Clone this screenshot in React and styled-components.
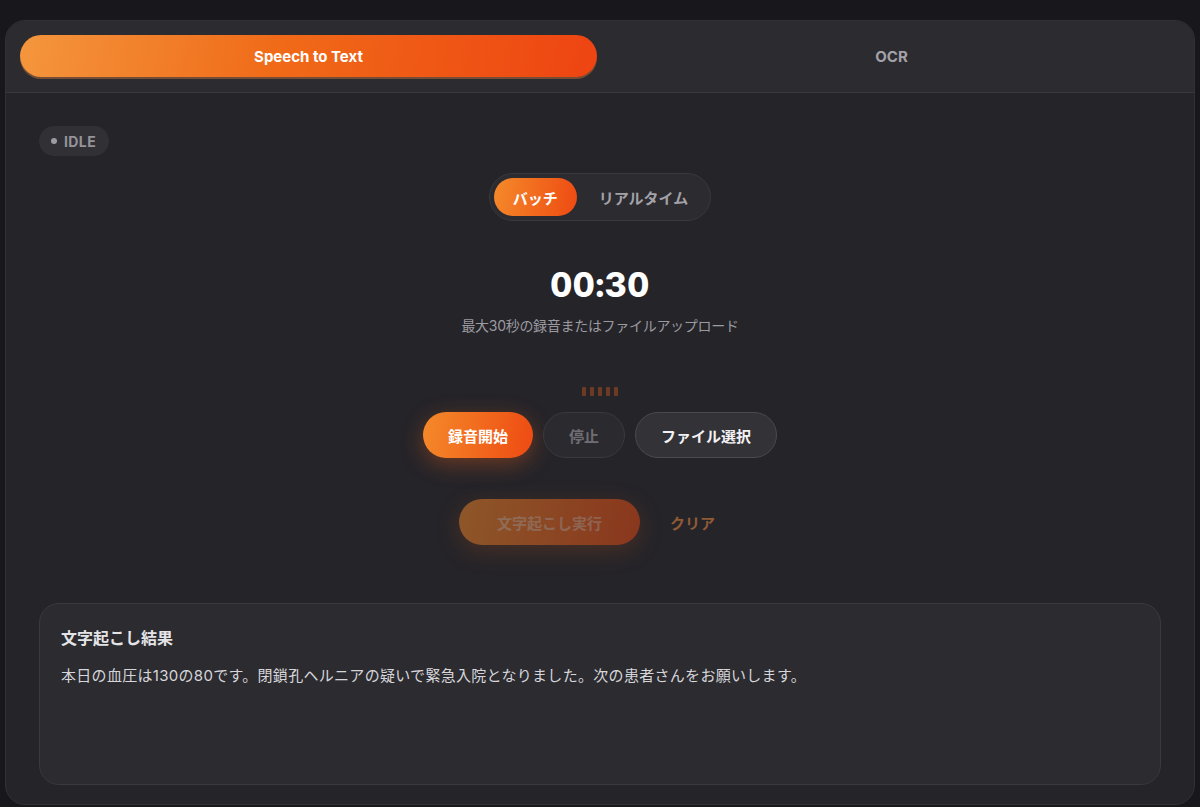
import styled, { createGlobalStyle } from "styled-components";

const GlobalStyle = createGlobalStyle`
    * { box-sizing: border-box; }
    html, body {
        margin: 0;
        padding: 0;
        background: #18171c;
        font-family: Inter, "Noto Sans CJK JP", sans-serif;
    }
`;

const App = () => {
    const bars = [0, 1, 2, 3, 4];

    return (
        <>
            <GlobalStyle />
            <Page>
                <Card>
                    <TabBar>
                        <Tab active>Speech to Text</Tab>
                        <Tab>OCR</Tab>
                    </TabBar>
                    <Body>
                        <StatusRow>
                            <Badge><Dot />IDLE</Badge>
                        </StatusRow>
                        <ModeToggle>
                            <ModeButton active>バッチ</ModeButton>
                            <ModeButton>リアルタイム</ModeButton>
                        </ModeToggle>
                        <Timer>00:30</Timer>
                        <Hint>最大30秒の録音またはファイルアップロード</Hint>
                        <Meter>
                            {bars.map((b) => <Bar key={b} />)}
                        </Meter>
                        <ButtonRow>
                            <PrimaryButton>録音開始</PrimaryButton>
                            <GhostButton disabled>停止</GhostButton>
                            <OutlineButton>ファイル選択</OutlineButton>
                        </ButtonRow>
                        <ActionRow>
                            <PrimaryButton dim wide>文字起こし実行</PrimaryButton>
                            <TextButton>クリア</TextButton>
                        </ActionRow>
                        <ResultBox>
                            <ResultTitle>文字起こし結果</ResultTitle>
                            <ResultText>本日の血圧は130の80です。閉鎖孔ヘルニアの疑いで緊急入院となりました。次の患者さんをお願いします。</ResultText>
                        </ResultBox>
                    </Body>
                </Card>
            </Page>
        </>
    );
};

export default App;

const Page = styled.div`
    width: 1200px;
    height: 807px;
    padding: 20px 5px 0 5px;
    overflow: hidden;
`;

const Card = styled.div`
    width: 1190px;
    height: 785px;
    border-radius: 20px;
    background: #252429;
    border: 1px solid #313035;
    overflow: hidden;
    display: flex;
    flex-direction: column;
`;

const TabBar = styled.div`
    display: grid;
    grid-template-columns: 1fr 1fr;
    column-gap: 6px;
    padding: 14px 14px 15px;
    background: #2c2b30;
    border-bottom: 1px solid #39383d;
`;

const Tab = styled.button`
    height: 42px;
    border: 0;
    border-radius: 21px;
    font-family: Inter, "Noto Sans CJK JP", sans-serif;
    font-size: 15px;
    font-weight: 700;
    cursor: pointer;
    background: ${(p) => (p.active ? "linear-gradient(100deg, #f4963d 0%, #f06a18 45%, #ee4412 100%)" : "transparent")};
    color: ${(p) => (p.active ? "#ffffff" : "#a3a2a8")};
    box-shadow: ${(p) => (p.active ? "0 2px 0 rgba(255, 140, 60, 0.35)" : "none")};
`;

const Body = styled.div`
    display: flex;
    flex-direction: column;
    align-items: center;
    padding: 33px 33px 0;
`;

const StatusRow = styled.div`
    align-self: stretch;
    display: flex;
`;

const Badge = styled.div`
    display: flex;
    align-items: center;
    column-gap: 7px;
    height: 30px;
    padding: 0 13px 0 12px;
    border-radius: 15px;
    background: #313035;
    color: #95949a;
    font-size: 14px;
    font-weight: 700;
    letter-spacing: 0.4px;
`;

const Dot = styled.span`
    width: 6px;
    height: 6px;
    border-radius: 50%;
    background: #9c9ba1;
`;

const ModeToggle = styled.div`
    margin-top: 17px;
    display: flex;
    align-items: center;
    column-gap: 4px;
    height: 48px;
    padding: 0 4px;
    border-radius: 24px;
    background: #2c2b30;
    border: 1px solid #3a393e;
`;

const ModeButton = styled.button`
    height: 38px;
    padding: 0 ${(p) => (p.active ? "19px" : "18px")};
    border: 0;
    border-radius: 19px;
    font-family: Inter, "Noto Sans CJK JP", sans-serif;
    font-size: 15px;
    font-weight: 700;
    cursor: pointer;
    background: ${(p) => (p.active ? "linear-gradient(100deg, #f58a2a 0%, #ee4a12 100%)" : "transparent")};
    color: ${(p) => (p.active ? "#ffffff" : "#a3a2a8")};
`;

const Timer = styled.div`
    margin-top: 44px;
    color: #ffffff;
    font-size: 34px;
    font-weight: 800;
    line-height: 40px;
    letter-spacing: 0.5px;
    font-variant-numeric: tabular-nums;
`;

const Hint = styled.div`
    margin-top: 11px;
    color: #9b9aa0;
    font-size: 14px;
    line-height: 20px;
    letter-spacing: -0.3px;
`;

const Meter = styled.div`
    margin-top: 51px;
    display: flex;
    column-gap: 4px;
    height: 9px;
`;

const Bar = styled.span`
    width: 4px;
    height: 9px;
    border-radius: 1px;
    background: #6e3a22;
`;

const ButtonRow = styled.div`
    margin-top: 16px;
    display: flex;
    column-gap: 10px;
`;

const PrimaryButton = styled.button`
    height: 46px;
    padding: 0 ${(p) => (p.wide ? "38px" : "25px")};
    border: 0;
    border-radius: 23px;
    font-family: Inter, "Noto Sans CJK JP", sans-serif;
    font-size: 15px;
    font-weight: 700;
    cursor: pointer;
    color: ${(p) => (p.dim ? "rgba(255, 255, 255, 0.45)" : "#ffffff")};
    background: linear-gradient(100deg, #f58a2a 0%, #ee4a12 100%);
    opacity: ${(p) => (p.dim ? 0.5 : 1)};
    box-shadow: 0 6px 22px rgba(244, 100, 30, 0.35);
`;

const GhostButton = styled.button`
    height: 46px;
    padding: 0 25px;
    border-radius: 23px;
    border: 1px solid #3a393e;
    background: #2b2a2f;
    color: #6f6e74;
    font-family: Inter, "Noto Sans CJK JP", sans-serif;
    font-size: 15px;
    font-weight: 700;
`;

const OutlineButton = styled.button`
    height: 46px;
    padding: 0 25px;
    border-radius: 23px;
    border: 1px solid #4a494f;
    background: #333237;
    color: #f2f2f4;
    font-family: Inter, "Noto Sans CJK JP", sans-serif;
    font-size: 15px;
    font-weight: 700;
    cursor: pointer;
`;

const ActionRow = styled.div`
    margin-top: 41px;
    display: flex;
    align-items: center;
    column-gap: 4px;
`;

const TextButton = styled.button`
    height: 46px;
    border: 0;
    background: transparent;
    padding: 0 26px;
    color: #8f5a36;
    font-family: Inter, "Noto Sans CJK JP", sans-serif;
    font-size: 15px;
    font-weight: 700;
    cursor: pointer;
`;

const ResultBox = styled.div`
    margin-top: 58px;
    align-self: stretch;
    height: 182px;
    padding: 24px 21px;
    border-radius: 20px;
    background: #2c2b30;
    border: 1px solid #3a393e;
`;

const ResultTitle = styled.div`
    color: #e4e4e7;
    font-size: 16px;
    font-weight: 700;
    line-height: 20px;
`;

const ResultText = styled.div`
    margin-top: 18px;
    color: #d6d6da;
    font-size: 15px;
    line-height: 20px;
    letter-spacing: 0.3px;
`;
